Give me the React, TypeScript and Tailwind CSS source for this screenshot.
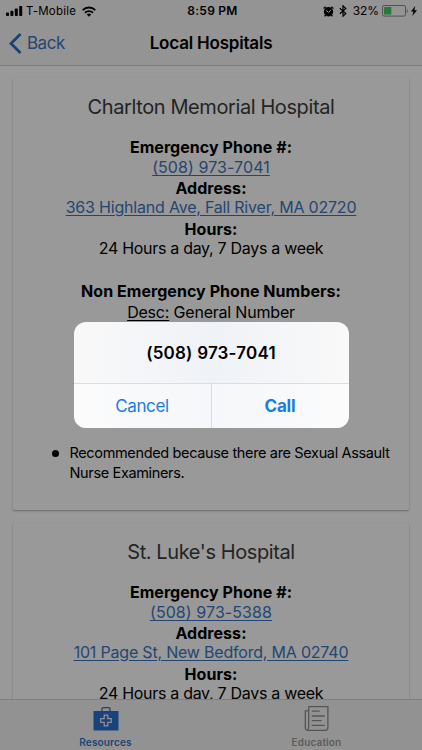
import type { ReactNode } from "react";

function Label({ children }: { children: ReactNode }) {
  return <p className="h-[21px] text-[16px] leading-[21px] font-bold tracking-[0.05px]">{children}</p>;
}

function Hospital({
  name,
  phone,
  address,
  children,
}: {
  name: string;
  phone: string;
  address: string;
  children?: ReactNode;
}) {
  return (
    <section className="h-[432px] shrink-0 rounded-[2px] bg-white text-center shadow-[0_1px_2px_rgba(0,0,0,0.32)]">
      <h2 className="pt-[16px] pb-[1px] text-[20px] leading-[26px] tracking-[-0.4px] text-[#3c3c3c]">{name}</h2>
      <div className="pt-[16px] text-[16px] tracking-[-0.2px]">
        <Label>Emergency Phone #:</Label>
        <a className="block h-[20px] leading-[18px] tracking-[0.08px] text-[#3f74bd] underline underline-offset-2">{phone}</a>
        <Label>Address:</Label>
        <a className="block h-[20px] leading-[17px] text-[#3f74bd] underline underline-offset-2">{address}</a>
        <Label>Hours:</Label>
        <p className="h-[20px] leading-[17px] tracking-[-0.3px]">24 Hours a day, 7 Days a week</p>
        {children}
      </div>
    </section>
  );
}

function StatusBar() {
  return (
    <div className="flex h-[22px] items-center justify-between pr-[5px] pl-[6px] text-[11.5px]">
      <div className="flex w-[150px] items-center">
        <svg width="17" height="10" viewBox="0 0 17 10">
          <rect x="0" y="6.5" width="3" height="3.5" rx="0.7" />
          <rect x="4.4" y="4.7" width="3" height="5.3" rx="0.7" />
          <rect x="8.8" y="2.5" width="3" height="7.5" rx="0.7" />
          <rect x="13.2" y="0" width="3" height="10" rx="0.7" />
        </svg>
        <span className="ml-[3px] pt-[1px] tracking-[0.2px]">T-Mobile</span>
        <svg className="ml-[6px]" width="14" height="11" viewBox="0 0 14 11" fill="none" stroke="#000" strokeWidth="1.9">
          <path d="M0.7 4.1a9 9 0 0 1 12.6 0" />
          <path d="M3 6.7a5.8 5.8 0 0 1 8 0" />
          <path d="M4.8 8.6L7 10.8l2.2-2.2a3.2 3.2 0 0 0-4.4 0z" fill="#000" stroke="none" />
        </svg>
      </div>
      <span className="pl-[2px] text-[12px] font-semibold tracking-[0.25px]">8:59 PM</span>
      <div className="flex w-[150px] items-center justify-end">
        <svg width="11" height="11" viewBox="0 0 11 11">
          <circle cx="5.5" cy="5.8" r="4.7" />
          <path d="M0.6 2.6L2.7 0.7M10.4 2.6L8.3 0.7M2.6 9L1.6 10.4M8.4 9l1 1.4" stroke="#000" strokeWidth="1.3" />
          <path d="M5.5 6.3L3.4 4.6M5.5 6.3L7.8 4.2" fill="none" stroke="#f7f7f7" strokeWidth="1" />
        </svg>
        <svg className="ml-[5px]" width="8" height="12" viewBox="0 0 8 12" fill="none" stroke="#000" strokeWidth="1.2">
          <path d="M0.8 3.2l6 5.4L4 11.2V0.8l2.8 2.6-6 5.4" />
        </svg>
        <span className="ml-[6px] text-[12px] tracking-[-0.1px]">32%</span>
        <svg className="ml-[3px]" width="26" height="12" viewBox="0 0 26 12">
          <rect x="0.5" y="0.5" width="23" height="10.6" rx="1.6" fill="none" stroke="#888" />
          <rect x="2" y="2" width="7.3" height="7.6" rx="0.6" fill="#43c95c" />
          <path d="M24.8 4v4q1-.6 1-2t-1-2z" fill="#888" />
        </svg>
        <svg className="ml-[3px]" width="6" height="10" viewBox="0 0 6 10">
          <path d="M4.2 0L0 5.5h2.4L1.4 10 6 4.2H3.4z" />
        </svg>
      </div>
    </div>
  );
}

function TabBar() {
  return (
    <nav className="flex h-[51px] shrink-0 border-t border-[#d4d4d4] bg-[#f4f4f4] text-[10px] font-semibold tracking-[0.15px]">
      <div className="flex w-[211px] flex-col items-center pt-[6px] text-[#3471c7]">
        <svg width="26" height="27" viewBox="0 0 26 27">
          <path d="M9 5V2.7Q9 1.7 10 1.7h6q1 0 1 1V5" fill="none" stroke="#2b70ce" strokeWidth="1.3" />
          <rect x="0.5" y="5" width="25" height="19.5" fill="#2b70ce" />
          <path
            d="M11.2 9.2h3.6v3.5h3.5v3.6h-3.5v3.5h-3.6v-3.5H7.7v-3.6h3.5z"
            fill="none"
            stroke="#f4f4f4"
            strokeWidth="1.2"
          />
        </svg>
        <span className="mt-[3px] leading-[12px]">Resources</span>
      </div>
      <div className="flex w-[211px] flex-col items-center pt-[5px] text-[#9a9a9a]">
        <svg width="26" height="28" viewBox="0 0 26 28" fill="none" stroke="#8d8d8d" strokeWidth="1.3">
          <path d="M4.7 1.6h19.2v21.2q0 2.5-2.5 2.5H4q-2.7 0-2.7-2.5V5.8h3.4" />
          <path d="M4.7 1.6V22q0 2.6-1.7 3.2M7.7 6.2h8M7.7 11h13M7.7 15.7h10M7.7 20.4h13" />
        </svg>
        <span className="mt-[3px] leading-[12px]">Education</span>
      </div>
    </nav>
  );
}

function CallDialog() {
  return (
    <div className="absolute inset-0 flex items-center justify-center bg-black/40">
      <div className="h-[106px] w-[275px] overflow-hidden rounded-[12px] bg-linear-to-r from-[#f9f9f9] via-[#eff2f7] to-[#f9f9f9] text-center">
        <div className="flex h-[62px] items-center justify-center border-b border-[#dcdde0] pt-[2px] text-[17px] font-semibold tracking-[0.2px]">
          (508) 973-7041
        </div>
        <div className="flex h-[44px] bg-white/40 text-[17px] text-[#187be6]">
          <button className="w-[138px] border-r border-[#dcdde0] pt-[2px] tracking-[-0.4px]">Cancel</button>
          <button className="w-[137px] pt-[2px] font-bold tracking-[-0.2px]">Call</button>
        </div>
      </div>
    </div>
  );
}

export default function App() {
  return (
    <main className="relative flex h-[750px] w-[422px] flex-col overflow-hidden bg-white font-['Inter','Liberation_Sans',sans-serif] text-black">
      <header className="h-[66px] shrink-0 border-b border-[#cfcfcf] bg-[#f7f7f7]">
        <StatusBar />
        <div className="flex h-[43px] items-center px-[9px]">
          <div className="flex w-[100px] items-center text-[17px] tracking-[-0.5px] text-[#3c76bd]">
            <svg width="13" height="21" viewBox="0 0 13 21" fill="none" stroke="#2f6fbd" strokeWidth="2.8">
              <path d="M11.5 1L2 10.5l9.5 9.5" />
            </svg>
            <span className="ml-[5px]">Back</span>
          </div>
          <h1 className="flex-1 text-center text-[17px] font-semibold tracking-[-0.2px]">Local Hospitals</h1>
          <div className="w-[100px]" />
        </div>
      </header>
      <div className="flex min-h-0 flex-1 flex-col gap-[13px] overflow-hidden px-[13px] pt-[12px]">
        <Hospital name="Charlton Memorial Hospital" phone="(508) 973-7041" address="363 Highland Ave, Fall River, MA 02720">
          <div className="pt-[21px]">
            <Label>Non Emergency Phone Numbers:</Label>
            <p className="h-[20px] leading-[20px]">
              <span className="underline underline-offset-2">Desc:</span> General Number
            </p>
          </div>
          <ul className="pt-[121px] pl-[39px] text-left text-[14.5px] leading-[19.5px] tracking-[-0.35px]">
            <li className="flex">
              <span className="mt-[7px] mr-[11px] size-[6.5px] shrink-0 rounded-full bg-black" />
              <span>
                Recommended because there are Sexual Assault
                <br />
                Nurse Examiners.
              </span>
            </li>
          </ul>
        </Hospital>
        <Hospital name="St. Luke's Hospital" phone="(508) 973-5388" address="101 Page St, New Bedford, MA 02740" />
      </div>
      <TabBar />
      <CallDialog />
    </main>
  );
}
